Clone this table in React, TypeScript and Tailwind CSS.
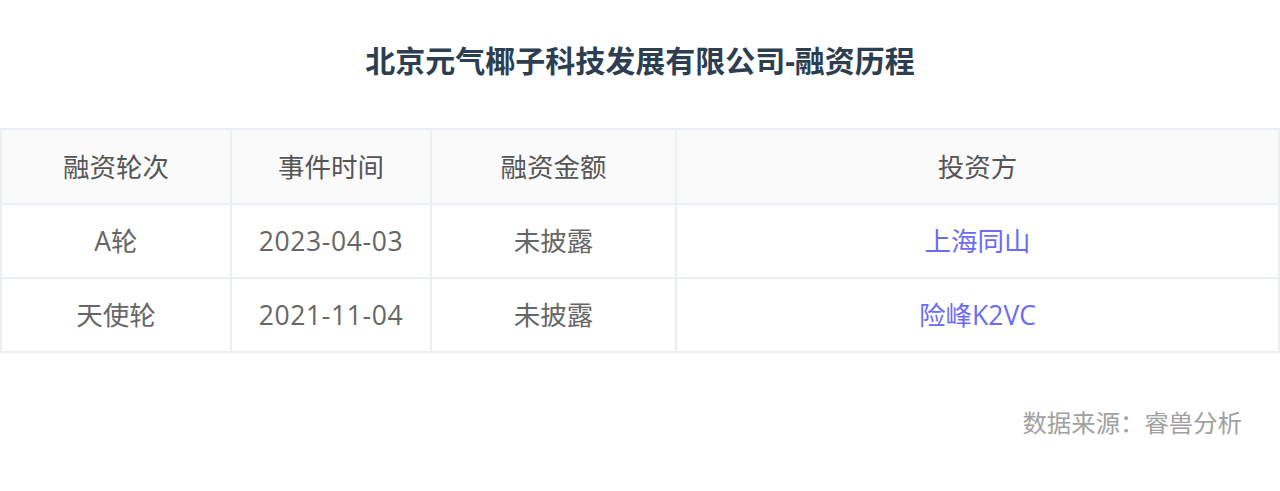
import React from "react";

const rows = [
  { round: "A轮", date: "2023-04-03", amount: "未披露", investor: "上海同山" },
  { round: "天使轮", date: "2021-11-04", amount: "未披露", investor: "险峰K2VC" },
];

export default function App() {
  return (
    <div
      className="w-[1280px] h-[491px] bg-white"
      style={{ fontFamily: '"Open Sans", "Noto Sans CJK SC", sans-serif' }}
    >
      <div className="h-[128px] flex items-center justify-center pb-[6px]">
        <h1 className="text-[30px] font-bold text-[#2c3e50] leading-none">
          北京元气椰子科技发展有限公司-融资历程
        </h1>
      </div>
      <div className="w-[1280px] border-t-2 border-l-2 border-[#eceef5]">
        <div className="flex h-[75px] bg-[#fafafa] text-[#555] text-[26.5px]">
          <div className="w-[230px] flex items-center justify-center pt-[2px] border-r-2 border-b-2 border-[#eceef5]">融资轮次</div>
          <div className="w-[200px] flex items-center justify-center pt-[2px] border-r-2 border-b-2 border-[#eceef5]">事件时间</div>
          <div className="w-[245px] flex items-center justify-center pt-[2px] border-r-2 border-b-2 border-[#eceef5]">融资金额</div>
          <div className="flex-1 flex items-center justify-center pt-[2px] border-r-2 border-b-2 border-[#eceef5]">投资方</div>
        </div>
        {rows.map((r) => (
          <div key={r.date} className="flex h-[74px] text-[#666] text-[26.5px]">
            <div className="w-[230px] flex items-center justify-center pt-[2px] border-r-2 border-b-2 border-[#eceef5]">{r.round}</div>
            <div className="w-[200px] flex items-center justify-center pt-[2px] border-r-2 border-b-2 border-[#eceef5] tracking-[0.6px]">{r.date}</div>
            <div className="w-[245px] flex items-center justify-center pt-[2px] border-r-2 border-b-2 border-[#eceef5]">{r.amount}</div>
            <div className="flex-1 flex items-center justify-center pt-[2px] border-r-2 border-b-2 border-[#eceef5] text-[#6b6cf2]">{r.investor}</div>
          </div>
        ))}
      </div>
      <div className="flex justify-end pr-[38px] pt-[58px]">
        <span className="text-[24.4px] text-[#a0a0a0] leading-none">数据来源：睿兽分析</span>
      </div>
    </div>
  );
}
